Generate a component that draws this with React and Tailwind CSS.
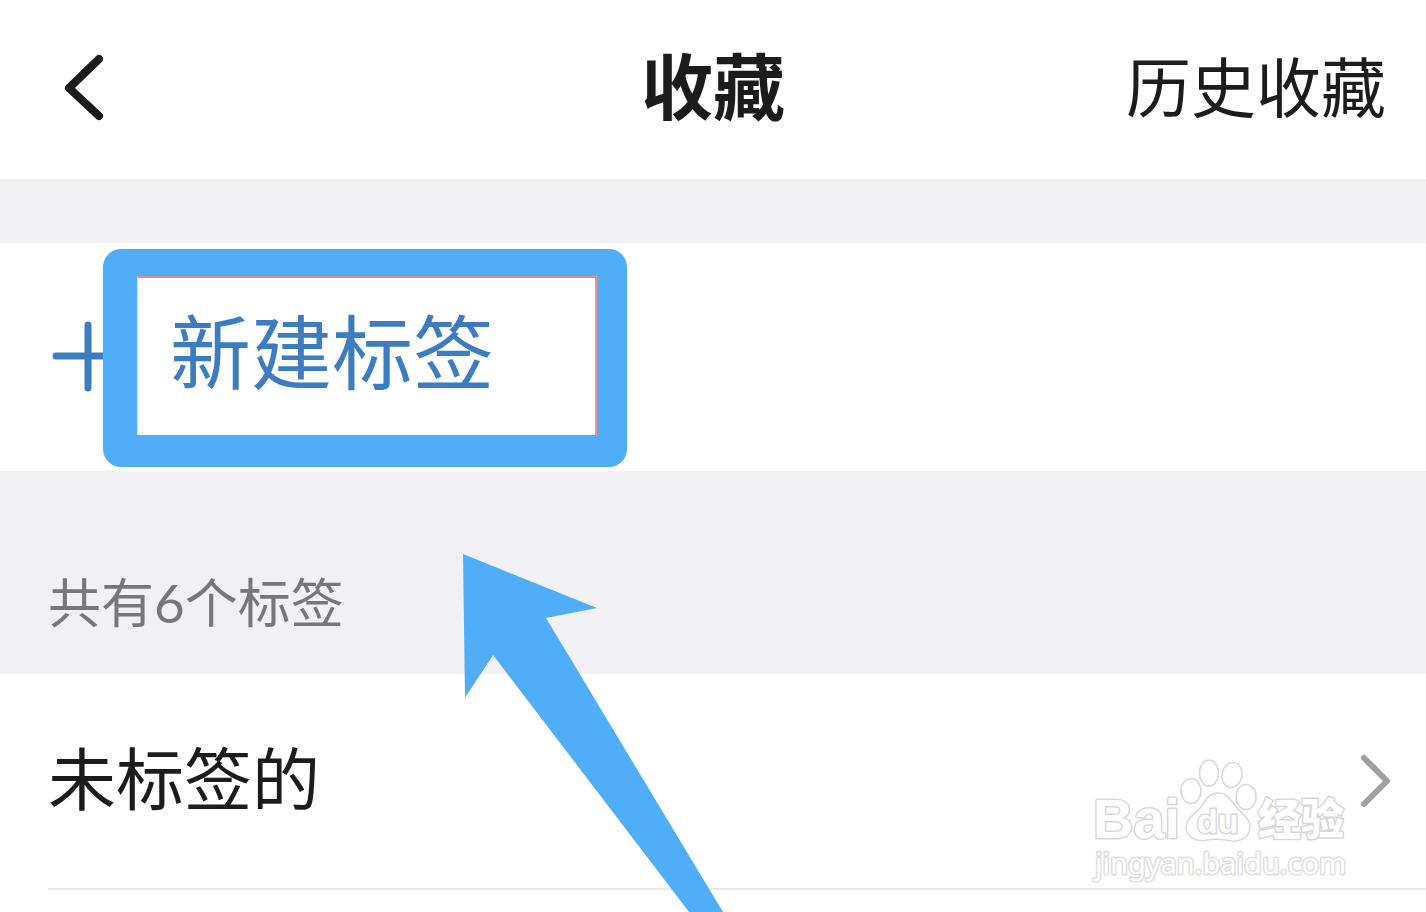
import React from "react";

const tags = [{ id: "untagged", name: "未标签的" }];

const BackIcon = () => (
  <svg className="w-10 h-[68px]" viewBox="0 0 40 68" fill="none" stroke="#1c1c1c" strokeWidth="8" strokeLinecap="round" strokeLinejoin="round">
    <path d="M35 5 L5 34 L35 62" />
  </svg>
);

const PlusIcon = () => (
  <svg className="w-[72px] h-[72px]" viewBox="0 0 72 72" fill="none" stroke="#3c7cc0" strokeWidth="7" strokeLinecap="round">
    <path d="M36 4 V67 M4 35 H68" />
  </svg>
);

const ChevronIcon = () => (
  <svg className="w-8 h-14" viewBox="0 0 32 56" fill="none" stroke="#a0a0a0" strokeWidth="6" strokeLinecap="round" strokeLinejoin="round">
    <path d="M4 5 L27 28 L4 51" />
  </svg>
);

/* Baidu Jingyan watermark */
const Watermark = () => (
  <svg
    className="absolute right-[70px] top-[82px] w-[266px] h-[130px] pointer-events-none"
    viewBox="0 0 266 130"
    fill="#ffffff"
    stroke="#d8d8d8"
    strokeWidth="1.5"
  >
    <g paintOrder="stroke" strokeWidth="3" strokeLinejoin="round">
      <text x="3" y="82" fontFamily="Liberation Sans, sans-serif" fontWeight="700" fontSize="56">
        Bai
      </text>
      <text x="168" y="79" fontFamily="Noto Sans CJK SC, sans-serif" fontWeight="900" fontSize="43">
        经验
      </text>
      <text x="5" y="118" fontFamily="Noto Sans, sans-serif" fontWeight="400" fontSize="29" stroke="#dedede">
        jingyan.baidu.com
      </text>
    </g>
    <ellipse cx="101" cy="35" rx="10" ry="12.5" />
    <ellipse cx="119" cy="17" rx="9.5" ry="13" />
    <ellipse cx="142" cy="19" rx="10" ry="12.5" transform="rotate(12 142 19)" />
    <ellipse cx="156" cy="41" rx="10" ry="12.5" />
    <path d="M128 37 C138 37 142 46 147 52 C153 59 161 63 160 72 C159 82 150 86 141 85 C133 83 124 83 117 84 C107 86 97 82 96 72 C96 62 104 59 110 52 C115 46 118 37 128 37 Z" />
    <text x="107" y="77" fontFamily="Liberation Sans, sans-serif" fontWeight="700" fontSize="34" paintOrder="stroke" strokeWidth="3">
      du
    </text>
  </svg>
);

/* Blue pointer that leads up to the highlighted button */
const Pointer = () => (
  <svg className="absolute left-[463px] top-[554px] w-[262px] h-[358px] pointer-events-none" viewBox="0 0 262 358" fill="#50aef9">
    <path d="M0 0 L134 54 L83 64 L260 358 L226 358 L30 101 L2 144 Z" />
  </svg>
);

const App = () => {
  return (
    <div className="relative min-h-screen overflow-hidden bg-white text-[#1c1c1c] font-['Lato','Noto_Sans_CJK_SC',sans-serif]">
      <header className="grid grid-cols-[1fr_auto_1fr] items-center h-[179px] px-10 pb-1">
        <button type="button" aria-label="返回" className="justify-self-start pl-6">
          <BackIcon />
        </button>
        <h1 className="pb-1 text-[72px] leading-none font-bold">收藏</h1>
        <a href="#history" className="justify-self-end text-[65px] leading-none">
          历史收藏
        </a>
      </header>

      <main>
        {/* NEW TAG */}
        <section className="border-t-[64px] border-[#f1f0f5]">
          <button type="button" className="relative flex items-center gap-[46px] w-full h-[228px] pl-[52px] text-left text-[#3c7cc0]">
            <PlusIcon />
            <span className="pb-3 text-[81px] leading-none">新建标签</span>
            <span className="absolute left-[103px] top-[6px] w-[524px] h-[218px] rounded-[18px] border-[#50aef9] border-t-[27px] border-b-[32px] border-l-[34px] border-r-[30px]">
              <span className="block h-full border-t-2 border-r-2 border-l border-t-[#e58a84] border-r-[#f0958c] border-l-[#fbd5d0]" />
            </span>
          </button>
        </section>

        {/* TAG LIST */}
        <section>
          <h2 className="flex items-end h-[203px] pl-12 pb-[45px] bg-[#f1f0f5] text-[53px] leading-none text-[#77767b]">
            共有6个标签
          </h2>
          <ul>
            {tags.map((tag) => (
              <li key={tag.id} className="relative pl-12">
                <a href="#untagged" className="flex items-center justify-between h-[216px] pr-[34px] border-b-2 border-[#e9e9eb]">
                  <span className="pb-1 text-[68px] leading-none">{tag.name}</span>
                  <ChevronIcon />
                </a>
                <Watermark />
              </li>
            ))}
          </ul>
        </section>
      </main>

      <Pointer />
    </div>
  );
};

export default App;
